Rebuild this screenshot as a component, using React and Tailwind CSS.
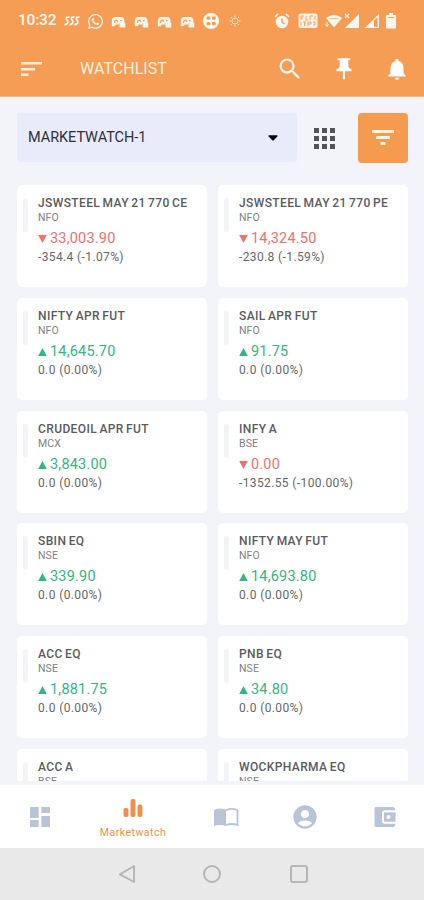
import {
  MdSearch,
  MdPushPin,
  MdNotifications,
  MdAccountCircle,
} from 'react-icons/md'
import { FaWhatsapp } from 'react-icons/fa'

const stocks = [
  { name: 'JSWSTEEL MAY 21 770 CE', exchange: 'NFO', price: '33,003.90', change: '-354.4 (-1.07%)', down: true },
  { name: 'JSWSTEEL MAY 21 770 PE', exchange: 'NFO', price: '14,324.50', change: '-230.8 (-1.59%)', down: true },
  { name: 'NIFTY APR FUT', exchange: 'NFO', price: '14,645.70', change: '0.0 (0.00%)' },
  { name: 'SAIL APR FUT', exchange: 'NFO', price: '91.75', change: '0.0 (0.00%)' },
  { name: 'CRUDEOIL APR FUT', exchange: 'MCX', price: '3,843.00', change: '0.0 (0.00%)' },
  { name: 'INFY A', exchange: 'BSE', price: '0.00', change: '-1352.55 (-100.00%)', down: true },
  { name: 'SBIN EQ', exchange: 'NSE', price: '339.90', change: '0.0 (0.00%)' },
  { name: 'NIFTY MAY FUT', exchange: 'NFO', price: '14,693.80', change: '0.0 (0.00%)' },
  { name: 'ACC EQ', exchange: 'NSE', price: '1,881.75', change: '0.0 (0.00%)' },
  { name: 'PNB EQ', exchange: 'NSE', price: '34.80', change: '0.0 (0.00%)' },
  { name: 'ACC A', exchange: 'BSE' },
  { name: 'WOCKPHARMA EQ', exchange: 'NSE' },
]

function GameIcon({ className }) {
  return (
    <svg viewBox="0 0 15 12" fill="none" className={`h-3 w-[15px] shrink-0 ${className}`}>
      <path d="M.8 9.5V5Q1 1 4 1H10.5Q13 1 13.5 5V7.5H8V8.5H5L3.5 10.3H1.2Z" fill="#fff5e8" />
      <path d="M3.6 7V5.2L5.8 4L6.8 5.8M9 4.6H10.6" stroke="#f59c55" strokeWidth="1.1" />
      <path d="M8.5 7H14.3V11.5H8.5Z" fill="#fff5e8" />
    </svg>
  )
}

function StatusBar() {
  return (
    <div className="flex h-[42px] items-center pl-[18px] text-[#fff8ef]">
      <span className="w-[40px] text-[15.5px] font-medium tracking-[-0.2px]">10:32</span>
      <svg viewBox="0 0 16 10" fill="none" stroke="currentColor" strokeWidth="1.7" className="ml-[6px] h-2.5 w-4 shrink-0">
        <path d="M5.5 1.2Q2.3.5 2.3 2.7Q2.5 4 3.7 4.7Q4.3 8.6.3 8.6M10.5 1.2Q7.3.5 7.3 2.7Q7.5 4 8.7 4.7Q9.3 8.6 5.3 8.6M15.5 1.2Q12.3.5 12.3 2.7Q12.5 4 13.7 4.7Q14.3 8.6 10.3 8.6" />
      </svg>
      <FaWhatsapp className="ml-[7px] size-[17px] shrink-0" />
      <GameIcon className="ml-[7px] mt-0.5" />
      <GameIcon className="ml-2 mt-0.5" />
      <GameIcon className="ml-2 mt-0.5" />
      <GameIcon className="ml-2 mt-0.5" />
      <svg viewBox="0 0 16 16" className="ml-[8px] size-4 shrink-0">
        <circle cx="8" cy="8" r="8" fill="#fff8ef" />
        <g fill="#f59c55">
          <rect x="3.5" y="3.5" width="3.7" height="3.2" rx="1" />
          <rect x="9" y="3.5" width="3.7" height="3.2" rx="1" />
          <rect x="3.5" y="9" width="3.7" height="3.2" rx="1" />
          <rect x="9" y="9" width="3.7" height="3.2" rx="1" />
        </g>
      </svg>
      <svg viewBox="0 0 12 12" fill="none" stroke="currentColor" strokeWidth="1" className="ml-[10px] size-3 shrink-0 opacity-75">
        <circle cx="6" cy="6" r="3" />
        <path d="M6 .5V2M6 10V11.5M.5 6H2M10 6H11.5M2 2L3.2 3.2M8.8 8.8L10 10M10 2L8.8 3.2M3.2 8.8L2 10" />
      </svg>

      <svg viewBox="0 0 16 16" fill="none" className="ml-[33px] size-4 shrink-0">
        <circle cx="8" cy="9" r="6.3" fill="currentColor" />
        <path d="M1 4L4 1M15 4L12 1" stroke="currentColor" strokeWidth="1.6" />
        <path d="M8 5.5V9.2L10.5 11" stroke="#f59c55" strokeWidth="1.4" />
      </svg>
      <svg viewBox="0 0 20 16" fill="none" className="ml-[8px] h-4 w-5 shrink-0">
        <rect x=".5" y=".5" width="19" height="14.5" rx="2" fill="#fff3e4" />
        <path d="M3 3V7M3 3H6M3 5H5M8 3V7H10M12 3V7M12 3H15M17 3V7M3 9V13M5 9H8M6.5 9V13M10 13V9H13V11H10M15 9H17V12H15" stroke="#f3a263" strokeWidth="1" />
      </svg>
      <svg viewBox="0 0 18 15" fill="none" className="ml-[7px] h-[15px] w-[18px] shrink-0">
        <path d="M1 4Q9-2 17 4L9 13.5Z" fill="currentColor" />
        <path d="M5 4.7H13" stroke="#f59c55" strokeWidth=".8" />
        <path d="M2 8V12M.5 10.5L2 12.5L3.5 10.5" stroke="currentColor" strokeWidth="1" />
      </svg>
      <svg viewBox="0 0 16 16" fill="none" className="ml-px size-4 shrink-0">
        <path d="M15 1V15H1Z" fill="currentColor" />
        <path d="M1 1L5 5M5 1L1 5" stroke="currentColor" strokeWidth="1.1" />
      </svg>
      <svg viewBox="0 0 16 16" fill="none" className="ml-[4px] size-4 shrink-0">
        <path d="M14.3 2.5V14.3H2.5Z" stroke="currentColor" strokeWidth="1.3" />
        <path d="M10 6.5V15H1.5Z" fill="currentColor" />
      </svg>
      <svg viewBox="0 0 10 16" fill="currentColor" className="ml-[6px] h-4 w-2.5 shrink-0">
        <path d="M3 0H7V2H9Q10 2 10 3V14.5Q10 15.5 9 15.5H1Q0 15.5 0 14.5V3Q0 2 1 2H3Z" />
        <path d="M2 4H8V5H2Z" fill="#f59c55" />
      </svg>
    </div>
  )
}

function Header() {
  return (
    <header className="h-[97px] shrink-0 border-b border-[#f8b47e] bg-[#f59c55]">
      <StatusBar />
      <div className="flex h-[54px] items-center pl-[21px] text-white">
        <svg viewBox="0 0 21 14" fill="#ffefd9" className="h-3.5 w-[21px]">
          <rect width="21" height="2.5" />
          <rect y="6" width="14" height="2.5" />
          <rect y="11.5" width="7.5" height="2.5" />
        </svg>
        <h1 className="ml-[38px] w-[196px] text-base tracking-[0.05px] text-[#fff1df]">WATCHLIST</h1>
        <MdSearch className="size-[28px] text-[#fff4e8]" />
        <MdPushPin className="ml-[27px] size-[26px]" />
        <MdNotifications className="ml-[27px] size-[26px]" />
      </div>
    </header>
  )
}

function Toolbar() {
  return (
    <div className="flex h-[49px] shrink-0 items-center">
      <div className="flex h-full w-[280px] items-center justify-between rounded-[3px] bg-[#e8ebf9] pl-[11px] pr-[19px]">
        <span className="text-[14.5px] tracking-[-0.05px] text-[#2e3038]">MARKETWATCH-1</span>
        <svg viewBox="0 0 10 6" className="h-1.5 w-2.5">
          <path d="M1 .3H9Q10 .3 9.3 1.5L5.8 5.2Q5 6 4.2 5.2L.7 1.5Q0 .3 1 .3Z" fill="#08080c" />
        </svg>
      </div>
      <div className="ml-[17px] mt-px grid grid-cols-3 gap-[3px]">
        {Array.from({ length: 9 }, (_, i) => (
          <span key={i} className="size-[5px] bg-[#505055]" />
        ))}
      </div>
      <button className="ml-auto -mr-px flex h-[50px] w-[50px] items-center justify-center rounded-[4px] bg-[#f59b50]">
        <svg viewBox="0 0 22 15" fill="#fff5e5" className="h-[15px] w-[22px]">
          <rect width="22" height="3" rx=".8" />
          <rect x="4" y="6" width="14" height="3" rx=".8" />
          <rect x="8.5" y="12" width="5" height="3" rx=".8" />
        </svg>
      </button>
    </div>
  )
}

function StockCard({ stock }) {
  return (
    <div className="flex h-[102px] rounded-[5px] bg-white pl-[6px] pt-[10px]">
      <div className="mt-[3px] h-[34px] w-[5px] shrink-0 rounded-sm bg-[#f3f4f8]" />
      <div className="ml-[10px] whitespace-nowrap text-[#66676a]">
        <p className="mt-px h-[15px] text-[12px] font-medium leading-[15px] tracking-[0.38px] text-[#5a5b5f] [word-spacing:-1px]">{stock.name}</p>
        <p className="h-[13px] text-[10.5px] leading-[13px] tracking-[0.1px] text-[#808184]">{stock.exchange}</p>
        {stock.price && (
          <>
            <div className={`mt-[5px] flex h-[20px] items-center ${stock.down ? 'text-[#f27070]' : 'text-[#35b582]'}`}>
              <svg viewBox="0 0 9 8" fill="currentColor" className="h-2 w-[9px]">
                <path d={stock.down ? 'M.2 0H8.8L4.5 8Z' : 'M.2 8H8.8L4.5 0Z'} />
              </svg>
              <span className="ml-[3px] text-[14.5px] leading-5 tracking-[0.2px]">{stock.price}</span>
            </div>
            <p className="-mt-px text-[12px] leading-[18px] tracking-[0.38px]">{stock.change}</p>
          </>
        )}
      </div>
    </div>
  )
}

function BottomNav() {
  return (
    <nav className="mt-[4px] flex h-[63px] shrink-0 items-center bg-white text-[#b9c4d7]">
      <svg viewBox="0 0 20 20" fill="currentColor" className="ml-[30px] size-5">
        <path d="M0 0H8.7V11H0ZM0 13H8.7V20H0ZM11.3 0H20V6H11.3ZM11.3 9H20V20H11.3Z" />
      </svg>
      <div className="ml-[45px] mt-[7px] flex w-[76px] flex-col items-center text-[#ed914a]">
        <svg viewBox="0 0 20 18" fill="currentColor" className="h-[18px] w-5">
          <rect x=".5" y="9" width="5" height="9" rx="2" />
          <rect x="7.5" width="5" height="18" rx="2" />
          <rect x="14.5" y="5.5" width="5" height="12.5" rx="2" />
        </svg>
        <span className="mt-[8px] text-[10.5px] leading-4 tracking-[0.5px]">Marketwatch</span>
      </div>
      <svg viewBox="0 0 26 20" className="ml-[42px] h-5 w-[26px]">
        <path d="M1 3Q6 .5 13 2.5V19Q7 17 1 19Z" fill="currentColor" />
        <path d="M13 3.2Q19 .5 24.5 3.2V18Q19 16 13 18" fill="none" stroke="currentColor" strokeWidth="1.8" />
      </svg>
      <MdAccountCircle className="ml-[52px] size-[28px]" />
      <svg viewBox="0 0 22 22" fill="none" className="ml-[55px] size-[22px]">
        <path d="M2 1H19Q21 1 21 3V4.3H11Q8 4.3 8 7V15Q8 17.7 11 17.7H21V19Q21 21 19 21H2Q.5 21 .5 19V3Q.5 1 2 1Z" fill="currentColor" />
        <rect x="10" y="6.3" width="11.5" height="9.4" fill="currentColor" />
        <circle cx="14.5" cy="11" r="2" fill="#fff" />
      </svg>
    </nav>
  )
}

function SystemBar() {
  return (
    <div className="flex h-[52px] shrink-0 items-center bg-[#e9e9e9] text-[#b5b5b5]">
      <svg viewBox="0 0 18 18" fill="none" stroke="currentColor" strokeWidth="1.9" strokeLinejoin="round" className="ml-[118px] size-[18px]">
        <path d="M16 1V17L2 9.3Z" />
      </svg>
      <div className="ml-[67px] size-[18px] rounded-full border-2 border-current" />
      <div className="ml-[69px] size-[18px] rounded-[3px] border-2 border-current" />
    </div>
  )
}

function App() {
  return (
    <div className="flex h-[900px] w-[424px] flex-col overflow-hidden bg-[#f3f4f9] font-['Roboto',sans-serif]">
      <Header />
      <main className="flex h-[684px] shrink-0 flex-col overflow-hidden px-[17px] pt-4">
        <Toolbar />
        <div className="mt-[23px] grid grid-cols-[190px_190px] gap-x-[11px] gap-y-[10.8px]">
          {stocks.map((stock) => (
            <StockCard key={stock.name} stock={stock} />
          ))}
        </div>
      </main>
      <BottomNav />
      <SystemBar />
    </div>
  )
}

export default App
